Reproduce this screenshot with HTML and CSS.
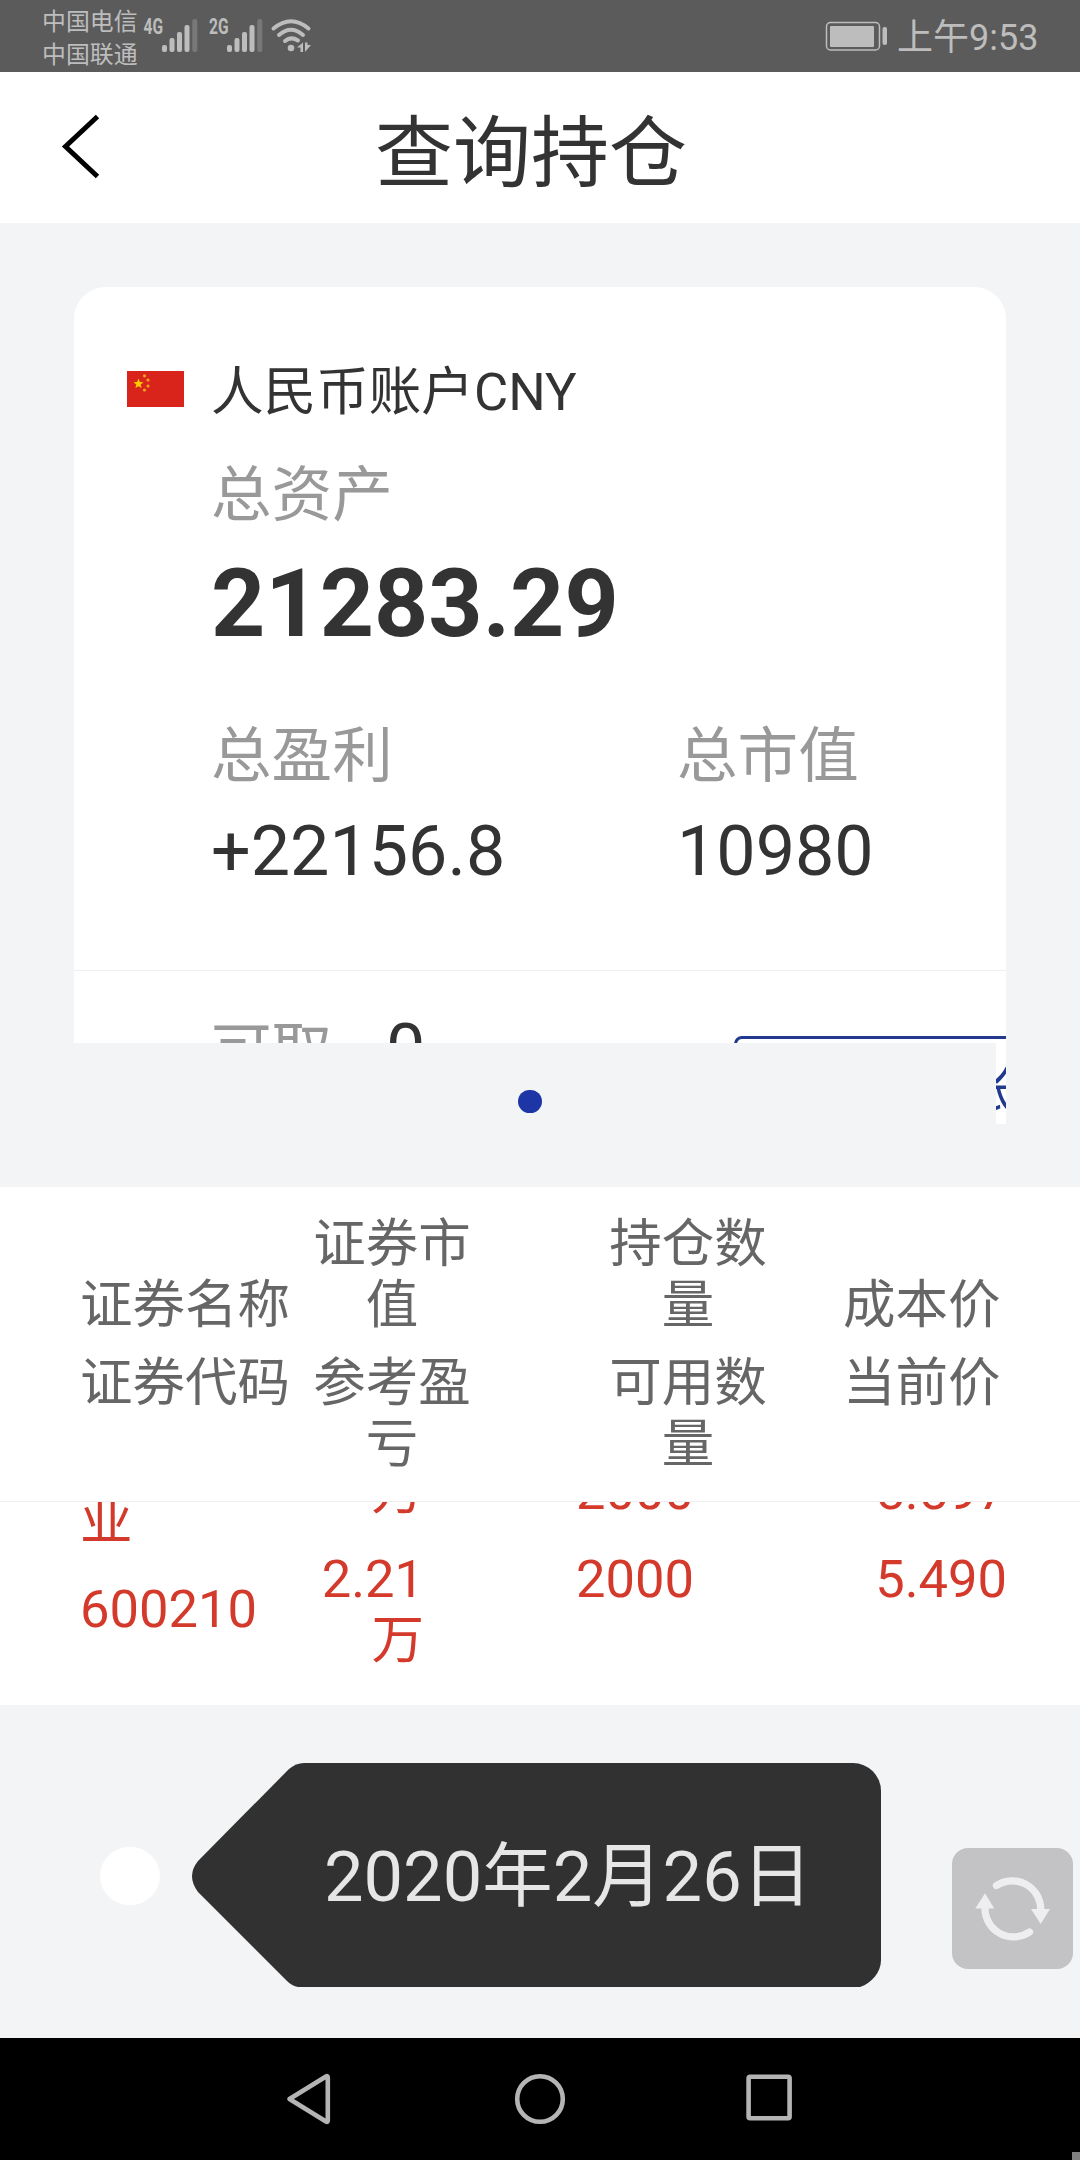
FILE: index.html
```html
<!DOCTYPE html>
<html lang="zh-CN">
<head>
<meta charset="utf-8">
<title>查询持仓</title>
<link rel="stylesheet" href="styles.css">
</head>
<body>
<div class="screen">
  <div class="status">
    <div class="carriers"><span>中国电信</span><span>中国联通</span></div>
    <svg class="signals" width="184" height="72" viewBox="136 0 184 72" fill="#bdbdbd">
      <text class="net" x="143.500" y="34" textLength="19.500" lengthAdjust="spacingAndGlyphs">4G</text>
      <rect x="162" y="45" width="5" height="7" rx="2"/><rect x="169.500" y="38" width="5" height="14" rx="2"/><rect x="177" y="32" width="5" height="20" rx="2"/><rect x="184.500" y="25" width="5" height="27" rx="2"/><rect x="192.300" y="19" width="5" height="33" rx="2" fill="#787878"/>
      <text class="net" x="209" y="34" textLength="19.500" lengthAdjust="spacingAndGlyphs">2G</text>
      <rect x="227" y="45" width="5" height="7" rx="2"/><rect x="234.500" y="38" width="5" height="14" rx="2"/><rect x="242" y="32" width="5" height="20" rx="2"/><rect x="249.500" y="25" width="5" height="27" rx="2"/><rect x="257.300" y="19" width="5" height="33" rx="2" fill="#787878"/>
      <g fill="none" stroke="#bdbdbd" stroke-width="4" stroke-linecap="round"><path d="M273.500 28.500Q291 14 308.500 28.500"/><path d="M279 35Q291 24.500 303 35"/><path d="M285 41Q291 36 298 40.500"/></g>
      <circle cx="291" cy="48" r="3.300"/><path d="M297 47.500l6-5v9.500h-2.500v-4.500zM305 42.500v9.500l6-7h-3.500v-2.500z"/>
    </svg>
    <svg class="battery" width="64" height="32" viewBox="0 0 64 32"><rect x="1.500" y="2.500" width="53" height="27.500" rx="4" fill="none" stroke="#bdbdbd" stroke-width="1.500"/><rect x="5" y="6" width="44" height="21" rx="1" fill="#bdbdbd"/><rect x="57.500" y="7" width="4.500" height="18" rx="2" fill="#bdbdbd"/></svg>
    <span class="clock">上午9:53</span>
  </div>
  <header class="header">
    <svg class="back" width="44" height="72" viewBox="0 0 44 72"><path d="M37.500 7.500L5.500 37.500L37.500 67.500" fill="none" stroke="#000" stroke-width="5"/></svg>
    <h1>查询持仓</h1>
  </header>
  <section class="carousel">
    <div class="viewport">
      <div class="card">
        <div class="account">
          <svg width="57" height="36" viewBox="0 0 57 36"><rect width="57" height="36" fill="#d9241c"/><path fill="#fc0" d="M11.500 7.500l1.400 3.500 3.600.3-2.800 2.300.9 3.500-3.100-1.900-3.100 1.900.9-3.500-2.800-2.300 3.600-.3z"/><g fill="#f6a51b"><circle cx="17.500" cy="4.800" r="1.600"/><circle cx="21" cy="9" r="1.600"/><circle cx="21" cy="15" r="1.600"/><circle cx="17.500" cy="19" r="1.600"/></g></svg>
          <span>人民币账户CNY</span>
        </div>
        <div class="label">总资产</div>
        <div class="total">21283.29</div>
        <div class="stats">
          <div><div class="label">总盈利</div><div class="value">+22156.8</div></div>
          <div><div class="label">总市值</div><div class="value">10980</div></div>
        </div>
        <div class="cash"><span class="label">可取</span><span class="value">0</span><span class="transfer"></span></div>
      </div>
    </div>
    <div class="peek"><span>账</span></div>
    <i class="dot"></i>
  </section>
  <section class="holdings">
    <div class="head">
      <div class="c1">证券名称</div><div class="c2">证券市值</div><div class="c3">持仓数量</div><div class="c4">成本价</div>
      <div class="c1 low">证券代码</div><div class="c2 low">参考盈亏</div><div class="c3 low">可用数量</div><div class="c4 low">当前价</div>
    </div>
    <div class="rows">
      <div class="row prev"><div class="name">业</div><div class="profit"><br>万</div><div class="qty">2000</div><div class="price">5.597</div></div>
      <div class="row"><div class="name code">600210</div><div class="profit">2.21<br>万</div><div class="qty">2000</div><div class="price">5.490</div></div>
    </div>
  </section>
  <section class="footer">
    <svg class="bubble" width="800" height="240" viewBox="92 1755 800 240"><ellipse cx="130" cy="1876" rx="30" ry="29.300" fill="#fff"/><path fill="#313131" d="M304 1763H853A28 28 0 0 1 881 1791V1960C881 1972 872 1983 860 1987H298Q292 1986 287 1981L198 1892Q186 1876 198 1861L289 1769Q296 1763 304 1763Z"/><text class="date" x="324" y="1900.500">2020年2月26日</text></svg>
    <svg class="refresh" width="121" height="121" viewBox="0 0 121 121"><rect width="121" height="121" rx="16" fill="#c3c3c5"/><g fill="none" stroke="#eeeef0" stroke-width="7.300" stroke-linecap="round"><path d="M44.500 37.500A28.500 28.500 0 0 1 88.700 61"/><path d="M33 60.500A28.500 28.500 0 0 0 77.500 84"/></g><path fill="#eeeef0" d="M79 61h19l-9.300 15zM23.300 60.500h19L33 45.300z"/></svg>
  </section>
  <nav class="nav">
    <svg width="1080" height="122" viewBox="0 0 1080 122" fill="none" stroke="#b4b4b4" stroke-width="4.600" stroke-linejoin="round"><path d="M289.500 61L326 38.500Q327.800 37.500 327.800 39.500V82.500Q327.800 84.500 326 83.500Z"/><circle cx="540" cy="61" r="22.800"/><rect x="748.600" y="38.800" width="41" height="41.500" rx="1.500"/><path d="M1072 114h8v8h-8z" fill="#808080" stroke="none"/></svg>
  </nav>
</div>
</body>
</html>
```
FILE: styles.css
```css
* { box-sizing: border-box; margin: 0; padding: 0; }
body { width: 1080px; height: 2160px; overflow: hidden; font-family: Roboto, "Noto Sans CJK SC", sans-serif; background: #f2f3f5; color: #333; }
svg { display: block; flex: none; }
.screen { width: 1080px; height: 2160px; display: flex; flex-direction: column; background: #f2f4f6; }
.screen > * { flex: none; }
.status { height: 72px; background: #5b5b5b; color: #bdbdbd; display: flex; align-items: center; padding-left: 42px; }
.carriers { width: 94px; padding-top: 5px; display: flex; flex-direction: column; font-size: 23.9px; line-height: 33px; white-space: nowrap; }
.net { font: bold 22px Roboto, sans-serif; }
.battery { margin-left: 505px; }
.clock { margin: 3px 0 0 8px; font-size: 36px; line-height: 72px; white-space: nowrap; }
.header { height: 151px; background: #fff; display: flex; align-items: center; padding-left: 60px; }
.back { margin-bottom: 6px; }
.header h1 { margin: 14px 0 0 271px; font-size: 78px; line-height: 100px; font-weight: 400; }
.carousel { height: 964px; padding: 64px 74px 0; position: relative; }
.viewport { height: 756px; overflow: hidden; border-radius: 32px 32px 0 0; }
.card { background: #fff; height: 900px; padding-top: 72px; }
.account { display: flex; align-items: center; height: 60px; padding-left: 53px; gap: 27px; font-size: 52.6px; line-height: 60px; }
.account span { padding-top: 6px; }
.label { color: #999; font-size: 60.6px; line-height: 70px; white-space: nowrap; }
.card > .label { margin: 42px 0 0 137px; }
.total { margin: 17px 0 0 137px; font-size: 94.7px; font-weight: 700; line-height: 111px; }
.stats { display: grid; grid-template-columns: 466px 1fr; margin: 63px 0 0 137px; height: 248px; }
.value { color: #333; font-size: 70px; line-height: 82px; }
.stats .value { margin-top: 18px; }
.cash { border-top: 1px solid #efeff0; padding: 37px 0 0 137px; display: flex; height: 200px; }
.cash > span { flex: none; }
.cash .label { width: 175px; line-height: 88px; }
.cash .transfer { margin: 28px 0 0 309px; width: 400px; height: 100px; border: 3px solid #21398f; border-radius: 8px; }
.cash .value { width: 39px; }
.peek { position: absolute; left: 996px; top: 820px; width: 10px; height: 81px; background: #fff; overflow: hidden; color: #21398f; font-size: 52px; line-height: 97px; }
.peek span { margin-left: -34px; }
.dot { position: absolute; left: 518px; top: 867px; width: 24px; height: 23px; border-radius: 12px; background: #1d35a5; }
.holdings { height: 518px; background: #fff; font-size: 52.5px; line-height: 61px; }
.head { height: 315px; border-bottom: 1px solid #efeff0; padding: 27px 0 0 80px; display: grid; grid-template-columns: 209px 206px 90px 206px 52px 161px; grid-template-rows: 122px 139px; color: #666; align-items: end; }
.head > div { text-align: center; }
.head .c1 { grid-column: 1; text-align: left; white-space: nowrap; }
.head .c2 { grid-column: 2; padding: 0 24px; }
.head .c3 { grid-column: 4; padding: 0 24px; }
.head .c4 { grid-column: 6; text-align: left; }
.head .low { align-self: start; padding-top: 17px; }
.rows { height: 203px; overflow: hidden; color: #d43a2b; }
.row { display: grid; grid-template-columns: 344px 270px 313px; padding-left: 80px; height: 122px; align-items: start; }
.row > div { text-align: right; }
.row .name { text-align: left; width: 200px; grid-column: 1; grid-row: 1; padding-top: 30px; }
.row .profit { grid-column: 1; grid-row: 1; }
.prev { margin-top: -71px; height: 118px; }
.prev .name { padding-top: 60px; }
.prev .profit { margin-top: -31px; }
.prev .qty, .prev .price { padding-top: 30px; }
.footer { height: 333px; display: flex; padding: 50px 0 0 92px; }
.date { font-size: 70.4px; fill: #e6e6e6; }
.refresh { margin: 93px 0 0 60px; }
.nav { height: 122px; background: #000; }
```
